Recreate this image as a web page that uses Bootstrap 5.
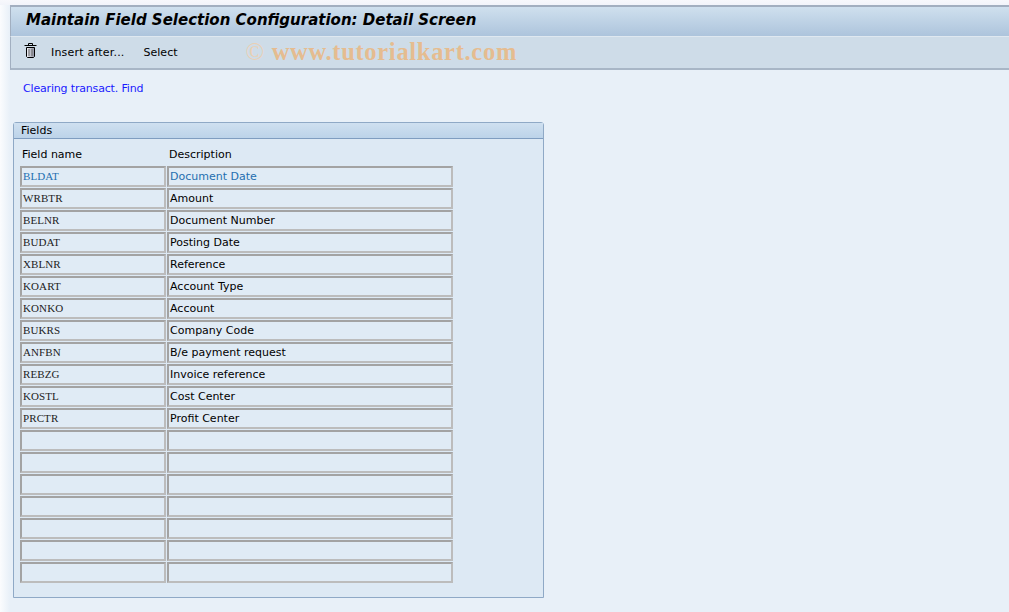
<!DOCTYPE html>
<html lang="en">
<head>
<meta charset="utf-8">
<title>Maintain Field Selection Configuration</title>
<link rel="stylesheet" href="https://cdn.jsdelivr.net/npm/bootstrap@5.3.0/dist/css/bootstrap.min.css">
<style>
html,body{height:100%;margin:0;overflow:hidden}
body{background:#e8f0f8;font-family:"DejaVu Sans",Tahoma,sans-serif;font-size:11px;line-height:16px;color:#000}
.shell{height:612px;padding-top:5px;padding-left:10px;background:linear-gradient(#f7f8fc,#f2f4fa 5px,transparent 5px),linear-gradient(90deg,#fbfcfe,#e8f0f8 10px)}
.titlebar{height:32px;border-top:2px solid #a2afc0;border-left:1px solid #a2afc0;background:linear-gradient(#cfe0ee,#adc4dc);border-bottom:1px solid #dfe8f0;padding-left:15px;font-family:"DejaVu Sans",Verdana,sans-serif;font-weight:700;font-style:italic;font-size:15px;line-height:26px;white-space:nowrap}
.toolbar{height:33px;background:#cedce8;border-bottom:2px solid #a8b6c6;border-left:1px solid #a2afc0;padding-left:13px}
.trash{width:13px;height:15px;margin-right:14px;margin-top:-4px}
.tool-txt{margin-right:18px}
.tool-wide{letter-spacing:.2px;margin-right:19px}
.mark-url{font-family:"Liberation Serif",serif;font-weight:700;font-size:24.5px;line-height:26px;color:#e5bc90;margin-left:50px;margin-bottom:2px;white-space:nowrap;letter-spacing:.7px}
.mark-c{color:#ead0b4}
.linkline{padding:11px 0 0 13px;color:#1a1aff;height:52px;letter-spacing:-.17px}
.fieldbox{margin-left:3px;width:531px;height:476px;background:#dde9f4;border:1px solid #8fa9c6;border-top-right-radius:3px;border-top-left-radius:3px}
.boxhead{height:16px;background:linear-gradient(#cfe0f0,#bcd3e9);border-bottom:1px solid #7f9dc0;padding-left:7px;line-height:15px}
.colhead{padding:8px 0 0 8px;height:27px}
.colhead span:first-child{width:147px}
.rows{padding-left:6px}
.cell{height:21px;background:#e0ebf5;border:2px solid;border-color:#a3a3a3 #bcbcbc #bcbcbc #a3a3a3;line-height:18px;padding-left:1px;overflow:hidden;white-space:nowrap}
.grid-row{height:22px;gap:1px}
.c1{width:146px;font-family:"Liberation Serif",serif;font-size:11px;line-height:17px;letter-spacing:.1px;color:#222}
.c2{width:286px}
.hl{color:#1f6fb0}
</style>
</head>
<body>
<div class="shell">
  <div class="titlebar">Maintain Field Selection Configuration: Detail Screen</div>
  <div class="toolbar d-flex align-items-center">
    <svg class="trash" viewBox="0 0 13 15" aria-hidden="true"><defs><linearGradient id="bin" x1="0" x2="1" y1="0" y2="0"><stop offset="0" stop-color="#f2f2f6"/><stop offset="1" stop-color="#8d90a0"/></linearGradient></defs><path d="M0.500 2.500h12M4.500 2V.5h4V2" fill="none" stroke="#000"/><path d="M2.500 4.500h8v9l-1 1h-6l-1-1z" fill="url(#bin)" stroke="#000"/><path d="M5 6v7M8 6v7" stroke="#666"/></svg>
    <span class="tool-txt tool-wide">Insert after...</span>
    <span class="tool-txt">Select</span>
    <span class="mark-url"><span class="mark-c fw-normal">©</span> www.tutorialkart.com</span>
  </div>
  <div class="linkline">Clearing transact. Find</div>
  <div class="fieldbox">
    <div class="boxhead">Fields</div>
    <div class="colhead d-flex"><span>Field name</span><span>Description</span></div>
    <div class="rows d-flex flex-column">
      <div class="grid-row d-flex"><div class="cell c1 hl">BLDAT</div><div class="cell c2 hl">Document Date</div></div>
      <div class="grid-row d-flex"><div class="cell c1">WRBTR</div><div class="cell c2">Amount</div></div>
      <div class="grid-row d-flex"><div class="cell c1">BELNR</div><div class="cell c2">Document Number</div></div>
      <div class="grid-row d-flex"><div class="cell c1">BUDAT</div><div class="cell c2">Posting Date</div></div>
      <div class="grid-row d-flex"><div class="cell c1">XBLNR</div><div class="cell c2">Reference</div></div>
      <div class="grid-row d-flex"><div class="cell c1">KOART</div><div class="cell c2">Account Type</div></div>
      <div class="grid-row d-flex"><div class="cell c1">KONKO</div><div class="cell c2">Account</div></div>
      <div class="grid-row d-flex"><div class="cell c1">BUKRS</div><div class="cell c2">Company Code</div></div>
      <div class="grid-row d-flex"><div class="cell c1">ANFBN</div><div class="cell c2">B/e payment request</div></div>
      <div class="grid-row d-flex"><div class="cell c1">REBZG</div><div class="cell c2">Invoice reference</div></div>
      <div class="grid-row d-flex"><div class="cell c1">KOSTL</div><div class="cell c2">Cost Center</div></div>
      <div class="grid-row d-flex"><div class="cell c1">PRCTR</div><div class="cell c2">Profit Center</div></div>
      <div class="grid-row d-flex"><div class="cell c1"></div><div class="cell c2"></div></div>
      <div class="grid-row d-flex"><div class="cell c1"></div><div class="cell c2"></div></div>
      <div class="grid-row d-flex"><div class="cell c1"></div><div class="cell c2"></div></div>
      <div class="grid-row d-flex"><div class="cell c1"></div><div class="cell c2"></div></div>
      <div class="grid-row d-flex"><div class="cell c1"></div><div class="cell c2"></div></div>
      <div class="grid-row d-flex"><div class="cell c1"></div><div class="cell c2"></div></div>
      <div class="grid-row d-flex"><div class="cell c1"></div><div class="cell c2"></div></div>
    </div>
  </div>
</div>
<script src="https://cdn.jsdelivr.net/npm/bootstrap@5.3.0/dist/js/bootstrap.bundle.min.js"></script>
</body>
</html>
